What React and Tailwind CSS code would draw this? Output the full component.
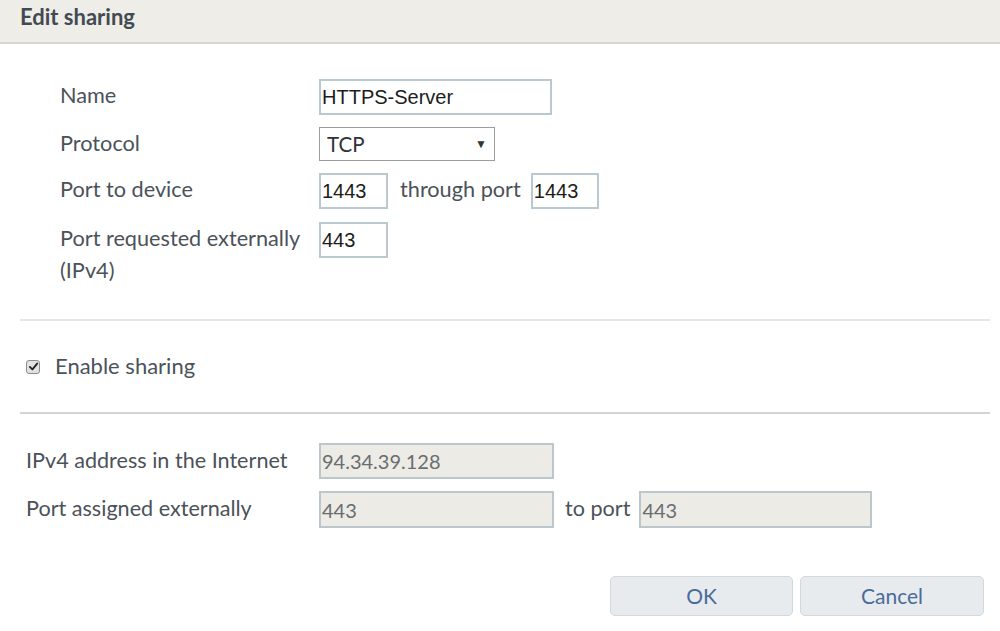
import React from "react";

const labelFont = { fontFamily: "Lato, 'Noto Sans', sans-serif" };
const inputFont = { fontFamily: "'Liberation Sans', Arial, sans-serif" };

const TextBox = ({ value, width, disabled, height = "h-[36px]" }) => (
  <div
    className={`${height} flex items-center pl-[1px] border-2 text-[20px] ${
      disabled
        ? "bg-[#ecebe6] border-[#bcc7cd] text-[#6a6d70]"
        : "bg-white border-[#bac8d0] text-[#1c1c1c]"
    } ${width}`}
    style={disabled ? labelFont : inputFont}
  >
    {value}
  </div>
);

const EditSharing = () => {
  return (
    <div className="w-[1000px] h-[631px] bg-white text-[#4b5259] overflow-hidden" style={labelFont}>
      <div className="h-[44px] bg-[#eeede8] border-b-2 border-[#d6d6d6] px-[20px] flex items-center">
        <h1 className="text-[22px] font-bold text-[#434a51] -mt-[10px]">Edit sharing</h1>
      </div>

      <div className="pl-[60px] pt-[35px] text-[21.7px]">
        <div className="flex items-start h-[48px]">
          <div className="w-[259px] h-[33px] flex items-center">Name</div>
          <TextBox value="HTTPS-Server" width="w-[233px]" />
        </div>
        <div className="flex items-start h-[46px]">
          <div className="w-[259px] h-[32px] flex items-center">Protocol</div>
          <div className="w-[176px] h-[34px] border border-[#9c9c9c] bg-white flex items-center justify-between pl-[7px] pr-[7px] text-[20.5px] text-[#2e3338]">
            <span>TCP</span>
            <span className="text-[12px] text-[#333]">▼</span>
          </div>
        </div>
        <div className="flex items-start h-[49px]">
          <div className="w-[259px] h-[33px] flex items-center">Port to device</div>
          <TextBox value="1443" width="w-[69px]" />
          <span className="h-[33px] flex items-center ml-[12px] mr-[10px]">through port</span>
          <TextBox value="1443" width="w-[68px]" />
        </div>
        <div className="flex items-start">
          <div className="w-[259px] leading-[32px]">
            Port requested externally
            <br />
            (IPv4)
          </div>
          <TextBox value="443" width="w-[69px]" />
        </div>
      </div>

      <div className="ml-[20px] mr-[10px] mt-[33px] border-t-2 border-[#e6e6e6]"></div>

      <div className="h-[91px] flex items-center pl-[26px] text-[22px]">
        <span className="w-[14px] h-[14px] rounded-[3px] border border-[#8c8c8c] bg-[#e2e2e2] flex items-center justify-center">
          <svg viewBox="0 0 12 12" className="w-[11px] h-[11px]">
            <path d="M2 6.5 L4.8 9.2 L10 2.8" fill="none" stroke="#222" strokeWidth="2" strokeLinecap="round" strokeLinejoin="round" />
          </svg>
        </span>
        <span className="ml-[15px] -mt-[2px]">Enable sharing</span>
      </div>

      <div className="ml-[20px] mr-[10px] border-t-2 border-[#d4d4d4]"></div>

      <div className="pl-[26px] pt-[29px] text-[21.6px]">
        <div className="flex items-start h-[48px]">
          <div className="w-[293px] h-[34px] flex items-center">IPv4 address in the Internet</div>
          <TextBox value="94.34.39.128" width="w-[235px]" disabled />
        </div>
        <div className="flex items-start">
          <div className="w-[293px] h-[35px] flex items-center">Port assigned externally</div>
          <TextBox value="443" width="w-[235px]" height="h-[37px]" disabled />
          <span className="h-[35px] flex items-center ml-[11px] mr-[9px]">to port</span>
          <TextBox value="443" width="w-[233px]" height="h-[37px]" disabled />
        </div>
      </div>

      <div className="flex justify-end gap-[7px] pr-[16px] mt-[48px]">
        <button className="w-[183px] h-[40px] rounded-[5px] border border-[#d2d8dd] bg-[#e7ebee] text-[21px] text-[#4a6b99]">
          OK
        </button>
        <button className="w-[184px] h-[40px] rounded-[5px] border border-[#d2d8dd] bg-[#e7ebee] text-[21px] text-[#4a6b99]">
          Cancel
        </button>
      </div>
    </div>
  );
};

export default function App() {
  return <EditSharing />;
}
